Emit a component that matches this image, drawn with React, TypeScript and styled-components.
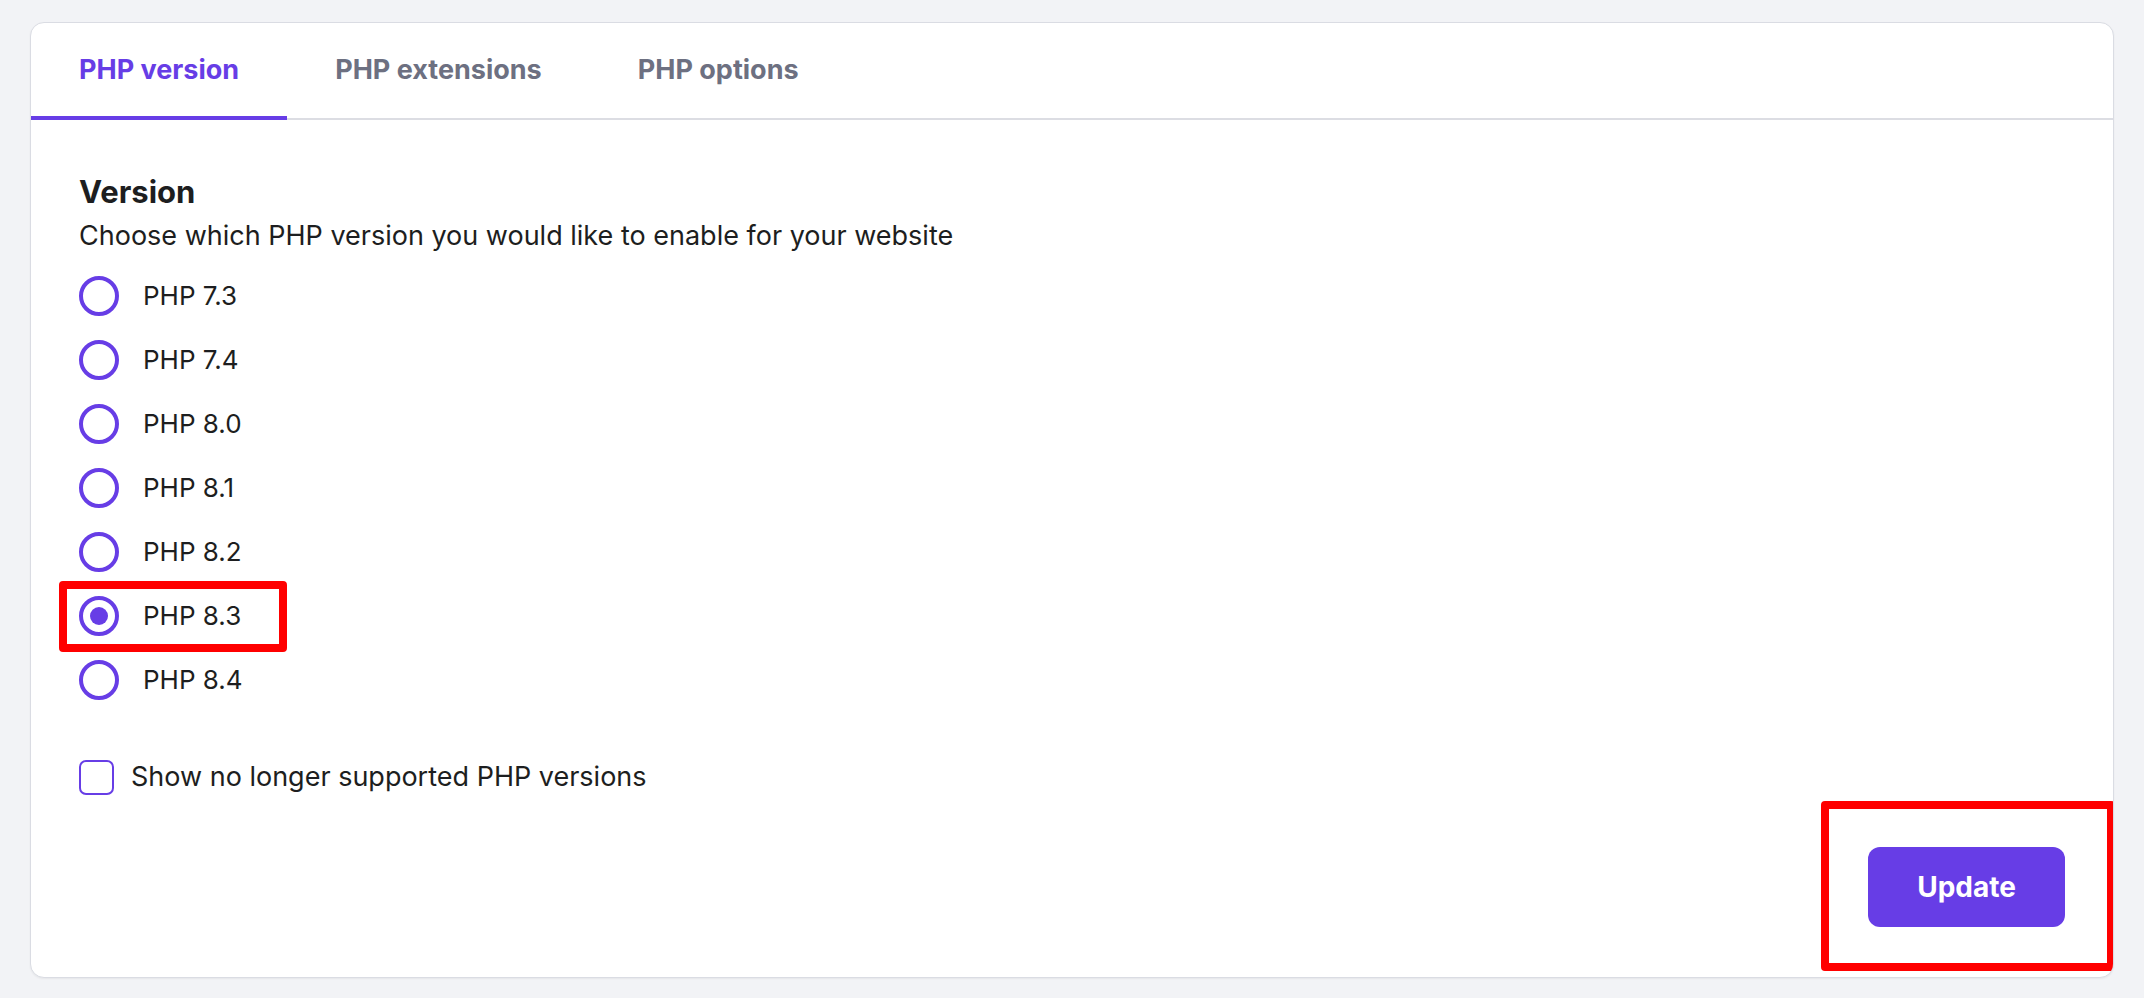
import styled, { createGlobalStyle } from "styled-components"
import { useState } from "react"

const GlobalStyle = createGlobalStyle`
  html, body {
    margin: 0;
    padding: 0;
    background: #f2f3f6;
    font-family: Inter, "Noto Sans", "Liberation Sans", sans-serif;
    color: #1d1e20;
  }
`

const Page = styled.main`
  padding: 22px 30px;
  box-sizing: border-box;
  min-height: 998px;
`

const Card = styled.section`
  background: #fff;
  border: 1px solid #dadce3;
  border-radius: 14px;
  box-shadow: 0 1px 2px rgba(29, 30, 32, 0.06);
  overflow: hidden;
`

const TabBar = styled.nav`
  display: flex;
  border-bottom: 2px solid #dcdde3;
`

const Tab = styled.button<{ $active?: boolean }>`
  height: 97px;
  padding: 0 48px;
  margin-bottom: -2px;
  background: none;
  border: none;
  border-bottom: 4px solid ${p => (p.$active ? "#673de6" : "transparent")};
  font-family: inherit;
  font-size: 27px;
  font-weight: 700;
  color: ${p => (p.$active ? "#673de6" : "#6d7081")};
  cursor: pointer;
`

const Body = styled.div`
  padding: 54px 48px 50px;
`

const Heading = styled.h2`
  margin: 0;
  font-size: 31px;
  line-height: 36px;
  font-weight: 700;
`

const Description = styled.p`
  margin: 8px 0 22px;
  font-size: 27px;
  line-height: 36px;
`

const RadioList = styled.div`
  display: flex;
  flex-direction: column;
  gap: 24px;
`

const RadioRow = styled.label`
  position: relative;
  display: flex;
  align-items: center;
  gap: 24px;
  align-self: flex-start;
  font-size: 26px;
  line-height: 40px;
  cursor: pointer;
`

const RadioCircle = styled.span<{ $checked?: boolean }>`
  box-sizing: border-box;
  width: 40px;
  height: 40px;
  border-radius: 50%;
  border: 4px solid #673de6;
  display: flex;
  align-items: center;
  justify-content: center;

  &::after {
    content: "";
    width: 18px;
    height: 18px;
    border-radius: 50%;
    background: #673de6;
    display: ${p => (p.$checked ? "block" : "none")};
  }
`

const Highlight = styled.span<{ $inset: string }>`
  position: absolute;
  inset: ${p => p.$inset};
  border: 8px solid #ff0000;
  border-radius: 4px;
  pointer-events: none;
`

const CheckRow = styled.label`
  display: flex;
  align-items: center;
  gap: 17px;
  margin-top: 59px;
  font-size: 27px;
  line-height: 36px;
  cursor: pointer;
`

const CheckBox = styled.span`
  box-sizing: border-box;
  width: 35px;
  height: 35px;
  border: 2px solid #673de6;
  border-radius: 7px;
`

const Footer = styled.div`
  display: flex;
  justify-content: flex-end;
  margin-top: 52px;
`

const ButtonWrap = styled.div`
  position: relative;
`

const UpdateButton = styled.button`
  width: 197px;
  height: 80px;
  border: none;
  border-radius: 12px;
  background: #673de6;
  color: #fff;
  font-family: inherit;
  font-size: 28px;
  font-weight: 700;
  cursor: pointer;
`

const versions = ["7.3", "7.4", "8.0", "8.1", "8.2", "8.3", "8.4"]

export default function App() {
  const [selected, setSelected] = useState("8.3")

  return (
    <>
      <GlobalStyle />
      <Page>
        <Card>
          <TabBar>
            <Tab $active>PHP version</Tab>
            <Tab>PHP extensions</Tab>
            <Tab>PHP options</Tab>
          </TabBar>

          <Body>
            <Heading>Version</Heading>
            <Description>Choose which PHP version you would like to enable for your website</Description>

            <RadioList>
              {versions.map(v => (
                <RadioRow key={v} onClick={() => setSelected(v)}>
                  <RadioCircle $checked={selected === v} />
                  PHP {v}
                  {v === "8.3" && <Highlight $inset="-15px -46px -16px -20px" />}
                </RadioRow>
              ))}
            </RadioList>

            <CheckRow>
              <CheckBox />
              Show no longer supported PHP versions
            </CheckRow>

            <Footer>
              <ButtonWrap>
                <UpdateButton>Update</UpdateButton>
                <Highlight $inset="-46px -50px -44px -47px" />
              </ButtonWrap>
            </Footer>
          </Body>
        </Card>
      </Page>
    </>
  )
}
